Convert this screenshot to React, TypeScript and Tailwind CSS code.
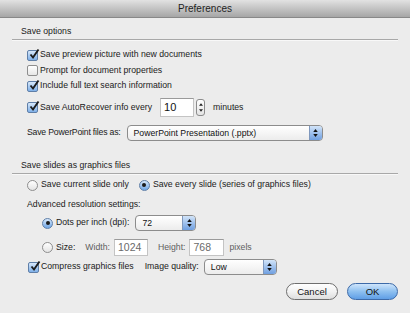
import React from "react"

function Checkbox({ checked }: { checked?: boolean }) {
  return (
    <span
      className={
        "relative inline-block w-[11px] h-[11px] rounded-[2px] border shrink-0 " +
        (checked
          ? "border-[#5f7fa8] bg-gradient-to-b from-[#d7e8fa] to-[#7fb0e8]"
          : "border-[#8e8e8e] bg-gradient-to-b from-[#ffffff] to-[#e6e6e6]")
      }
    >
      {checked && (
        <svg viewBox="0 0 12 12" className="absolute left-[0px] top-[-3px] w-[12px] h-[12px]">
          <path d="M2.5 6.5 L5 9.5 L10.5 1.5" fill="none" stroke="#1b1b1b" strokeWidth="1.9" />
        </svg>
      )}
    </span>
  )
}

function Radio({ checked }: { checked?: boolean }) {
  return (
    <span
      className={
        "inline-flex items-center justify-center w-[11px] h-[11px] rounded-full border shrink-0 " +
        (checked
          ? "border-[#5f7fa8] bg-gradient-to-b from-[#d7e8fa] to-[#6fa6e6]"
          : "border-[#8e8e8e] bg-gradient-to-b from-[#ffffff] to-[#e4e4e4]")
      }
    >
      {checked && <span className="w-[4px] h-[4px] rounded-full bg-[#1b1b1b]" />}
    </span>
  )
}

function Popup({ label, width }: { label: string; width: string }) {
  return (
    <div
      className={
        width +
        " h-[16px] flex rounded-[4px] border border-[#8c8c8c] bg-gradient-to-b from-[#ffffff] to-[#ececec] overflow-hidden"
      }
    >
      <span className="flex-1 pl-[6px] leading-[14px] text-[#111]">{label}</span>
      <span className="w-[13px] border-l border-[#7f98bd] bg-gradient-to-b from-[#d2e4f8] to-[#6f9fe0] flex flex-col items-center justify-center gap-[2px]">
        <svg viewBox="0 0 6 4" className="w-[5px] h-[3px]">
          <path d="M3 0 L6 4 L0 4 Z" fill="#111" />
        </svg>
        <svg viewBox="0 0 6 4" className="w-[5px] h-[3px]">
          <path d="M0 0 L6 0 L3 4 Z" fill="#111" />
        </svg>
      </span>
    </div>
  )
}

function TextBox({ value, width, muted }: { value: string; width: string; muted?: boolean }) {
  return (
    <div
      className={
        width +
        " h-[17px] bg-white border border-[#c4c4c4] border-t-[#9a9a9a] pl-[3px] leading-[15px] text-[10.5px] " +
        (muted ? "text-[#6a6a6a]" : "text-[#111]")
      }
    >
      {value}
    </div>
  )
}

export default function App() {
  return (
    <div className="w-[410px] h-[313px] bg-[#ececec] font-['Liberation_Sans',Arial,sans-serif] text-[8.7px] text-[#1a1a1a] overflow-hidden">
      {/* Title bar */}
      <div className="h-[18px] bg-gradient-to-b from-[#e2e2e2] to-[#a6a6a6] border-b border-[#888] flex items-center justify-center text-[10px] text-[#1e1e1e]">
        Preferences
      </div>

      <div className="px-[12px] flex flex-col">
        {/* Save options */}
        <div className="mt-[7px] h-[14px] flex items-center pl-[9px]">Save options</div>
        <div className="h-[1px] bg-[#a8a8a8] border-b border-[#f8f8f8] box-content" />

        <div className="pl-[15px] flex flex-col">
          <div className="mt-[6px] h-[16px] flex items-center gap-[2px]">
            <Checkbox checked />
            <span>Save preview picture with new documents</span>
          </div>
          <div className="h-[15px] flex items-center gap-[2px]">
            <Checkbox />
            <span>Prompt for document properties</span>
          </div>
          <div className="h-[16px] flex items-center gap-[2px]">
            <Checkbox checked />
            <span>Include full text search information</span>
          </div>
          <div className="mt-[4px] h-[19px] flex items-center">
            <Checkbox checked />
            <span className="ml-[2px]">Save AutoRecover info every</span>
            <div className="ml-[8px] w-[34px] h-[19px] bg-white border border-[#c4c4c4] border-t-[#9a9a9a] pl-[3px] leading-[16px] text-[11px] text-[#111]">
              10
            </div>
            <div className="ml-[2px] w-[9px] h-[17px] rounded-[3px] border border-[#8c8c8c] bg-gradient-to-b from-[#ffffff] to-[#e4e4e4] flex flex-col items-center justify-center gap-[3px]">
              <svg viewBox="0 0 6 4" className="w-[4px] h-[3px]">
                <path d="M3 0 L6 4 L0 4 Z" fill="#222" />
              </svg>
              <svg viewBox="0 0 6 4" className="w-[4px] h-[3px]">
                <path d="M0 0 L6 0 L3 4 Z" fill="#222" />
              </svg>
            </div>
            <span className="ml-[8px]">minutes</span>
          </div>
          <div className="mt-[8px] h-[16px] flex items-center">
            <span className="tracking-[-0.2px]">Save PowerPoint files as:</span>
            <div className="ml-[6px]">
              <Popup label="PowerPoint Presentation (.pptx)" width="w-[196px]" />
            </div>
          </div>
        </div>

        {/* Save slides as graphics files */}
        <div className="mt-[18px] h-[14px] flex items-center pl-[9px]">Save slides as graphics files</div>
        <div className="h-[1px] bg-[#a8a8a8] border-b border-[#f8f8f8] box-content" />

        <div className="pl-[15px] flex flex-col">
          <div className="mt-[2px] h-[16px] flex items-center">
            <Radio />
            <span className="ml-[3px]">Save current slide only</span>
            <span className="ml-[10px]">
              <Radio checked />
            </span>
            <span className="ml-[3px]">Save every slide (series of graphics files)</span>
          </div>
          <div className="mt-[4px] h-[16px] flex items-center">Advanced resolution settings:</div>
          <div className="mt-[2px] h-[16px] flex items-center pl-[15px]">
            <Radio checked />
            <span className="ml-[3px]">Dots per inch (dpi):</span>
            <div className="ml-[6px]">
              <Popup label="72" width="w-[61px]" />
            </div>
          </div>
          <div className="mt-[8px] h-[17px] flex items-center pl-[15px]">
            <Radio />
            <span className="ml-[3px]">Size:</span>
            <span className="ml-[10px] text-[#5e5e5e]">Width:</span>
            <div className="ml-[4px]">
              <TextBox value="1024" width="w-[34px]" muted />
            </div>
            <span className="ml-[10px] text-[#5e5e5e]">Height:</span>
            <div className="ml-[4px]">
              <TextBox value="768" width="w-[35px]" muted />
            </div>
            <span className="ml-[5px] text-[#5e5e5e]">pixels</span>
          </div>
          <div className="mt-[3px] h-[16px] flex items-center pl-[1px]">
            <Checkbox checked />
            <span className="ml-[2px]">Compress graphics files</span>
            <span className="ml-[11px]">Image quality:</span>
            <div className="ml-[5px]">
              <Popup label="Low" width="w-[73px]" />
            </div>
          </div>
        </div>

        {/* Buttons */}
        <div className="mt-[8px] h-[17px] flex justify-end gap-[9px]">
          <button className="w-[52px] h-[17px] rounded-full border border-[#6e6e6e] bg-gradient-to-b from-[#ffffff] via-[#f2f2f2] to-[#dedede] text-[9.5px] leading-[15px] text-[#111]">
            Cancel
          </button>
          <button className="w-[51px] h-[17px] rounded-full border border-[#3d6aa8] bg-gradient-to-b from-[#cfe5fb] via-[#8ec0f0] to-[#5f9ee6] text-[9.5px] leading-[15px] text-[#111]">
            OK
          </button>
        </div>
      </div>
    </div>
  )
}
